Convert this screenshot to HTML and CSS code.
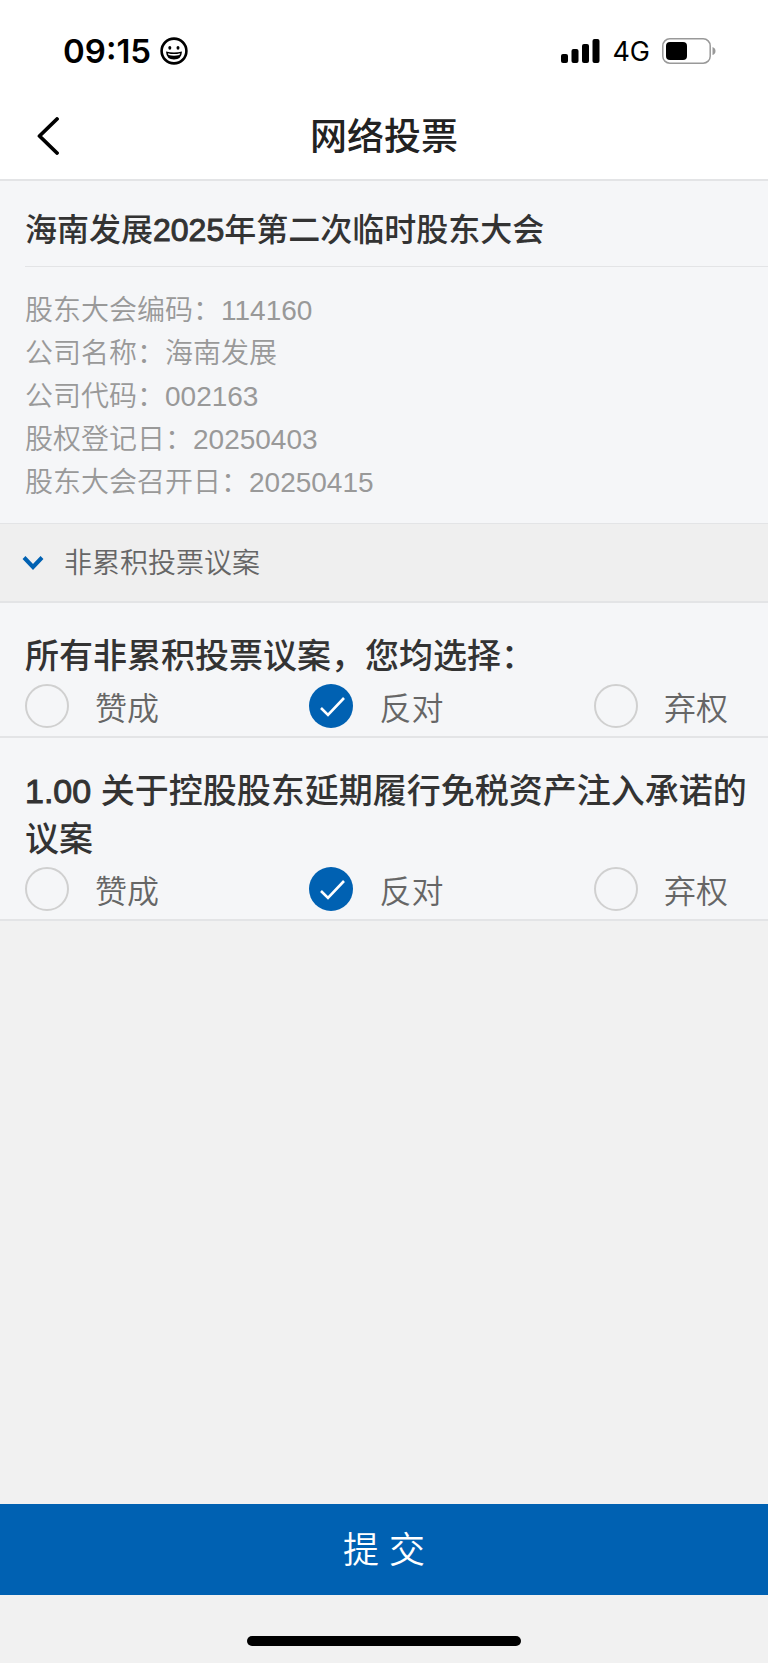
FILE: index.html
```html
<!DOCTYPE html>
<html lang="zh-CN">
<head>
    <meta charset="UTF-8">
    <meta name="viewport" content="width=device-width, initial-scale=1.0">
    <title>网络投票</title>
    <link rel="stylesheet" href="styles.css">
</head>
<body>
    <div class="statusbar">
        <div class="status-left">
            <span class="time">09:15</span>
            <svg class="smile" width="28" height="28" viewBox="0 0 28 28">
                <circle cx="14" cy="14" r="12.4" fill="none" stroke="#000" stroke-width="2.6"/>
                <ellipse cx="9.8" cy="10.8" rx="1.5" ry="1.9"/>
                <ellipse cx="18" cy="10.8" rx="1.5" ry="1.9"/>
                <path d="M6 14.4Q14 16.6 22 14.4Q21.6 22.4 14 22.4Q6.4 22.4 6 14.4Z"/>
                <path d="M7.8 16.2Q14 17.9 20.2 16.2L19.5 18Q14 19.3 8.5 18Z" fill="#fff"/>
            </svg>
        </div>
        <div class="status-right">
            <svg width="39" height="24" viewBox="0 0 39 24">
                <rect x="0" y="15" width="7" height="9" rx="2"/>
                <rect x="10.5" y="10" width="7" height="14" rx="2"/>
                <rect x="21" y="5" width="7" height="19" rx="2"/>
                <rect x="31.5" y="0" width="7" height="24" rx="2"/>
            </svg>
            <span class="network">4G</span>
            <svg width="54" height="26" viewBox="0 0 54 26">
                <rect x="0.8" y="0.8" width="47.4" height="24.4" rx="7" fill="none" stroke="#999" stroke-width="1.5"/>
                <rect x="4" y="4" width="21" height="18" rx="4"/>
                <path d="M50.5 9Q53.5 10 53.5 13Q53.5 16 50.5 17Z" fill="#999"/>
            </svg>
        </div>
    </div>

    <header class="navbar">
        <button class="back" type="button" aria-label="返回">
            <svg width="22" height="38" viewBox="0 0 22 38">
                <path d="M20 2L2.5 19L20 36" fill="none" stroke="#000" stroke-width="3.8" stroke-linecap="round" stroke-linejoin="round"/>
            </svg>
        </button>
        <h1>网络投票</h1>
    </header>

    <main>
        <section class="meeting">
            <h2>海南发展<span class="num">2025</span>年第二次临时股东大会</h2>
            <div class="info">
                <p>股东大会编码：114160</p>
                <p>公司名称：海南发展</p>
                <p>公司代码：002163</p>
                <p>股权登记日：20250403</p>
                <p>股东大会召开日：20250415</p>
            </div>
        </section>

        <button class="group" type="button" aria-expanded="true">
            <svg width="22" height="16" viewBox="0 0 22 16">
                <path d="M2 2.5L11 12L20 2.5" fill="none" stroke="#0061b2" stroke-width="4"/>
            </svg>
            <span>非累积投票议案</span>
        </button>

        <fieldset class="vote">
            <legend>所有非累积投票议案，您均选择：</legend>
            <div class="options">
                <label><input type="radio" name="all" value="1">赞成</label>
                <label><input type="radio" name="all" value="2" checked>反对</label>
                <label><input type="radio" name="all" value="3">弃权</label>
            </div>
        </fieldset>

        <fieldset class="vote">
            <legend><span class="num">1.00</span> 关于控股股东延期履行免税资产注入承诺的议案</legend>
            <div class="options">
                <label><input type="radio" name="item1" value="1">赞成</label>
                <label><input type="radio" name="item1" value="2" checked>反对</label>
                <label><input type="radio" name="item1" value="3">弃权</label>
            </div>
        </fieldset>
    </main>

    <footer>
        <button class="submit" type="submit">提 交</button>
        <div class="home"></div>
    </footer>
</body>
</html>
```

FILE: styles.css
```css
:root{
    --blue: #0061b2;
    --line: #e3e4e6;
    --panel: #f5f6f8;
}
*{
    box-sizing: border-box;
}
body{
    margin: 0;
    min-height: 100vh;
    display: flex;
    flex-direction: column;
    background-color: #f1f1f1;
    font-family: "Liberation Sans", "Noto Sans CJK SC", sans-serif;
    color: #333;
}
h1, h2, p{
    margin: 0;
}
button{
    font-family: inherit;
    border: none;
    padding: 0;
}
svg{
    display: block;
}

/* status bar */
.statusbar{
    display: flex;
    justify-content: space-between;
    align-items: center;
    height: 92px;
    padding: 10px 52px 0 63px;
    background-color: white;
    color: black;
    font-family: Inter, sans-serif;
}
.status-left{
    display: flex;
    align-items: center;
    gap: 9px;
}
.status-right{
    display: flex;
    align-items: center;
    gap: 12px;
}
.time{
    font-size: 33px;
    font-weight: 600;
}
.network{
    font-size: 27px;
}

/* title bar */
.navbar{
    display: grid;
    grid-template-columns: 60px 1fr 60px;
    align-items: center;
    height: 89px;
    padding: 0 16px;
    background-color: white;
    border-bottom: 2px solid var(--line);
}
.back{
    display: flex;
    align-items: center;
    height: 60px;
    padding-left: 21px;
    background: none;
}
h1{
    padding-bottom: 4px;
    font-size: 37px;
    font-weight: 500;
    text-align: center;
    color: #222;
}

/* the latin font has no medium weight, thicken the digits a bit */
.num{
    -webkit-text-stroke: 1px #333;
}

/* meeting info */
.meeting{
    background-color: var(--panel);
    padding-left: 25px;
}
h2{
    font-size: 32px;
    font-weight: 500;
    line-height: 48px;
    padding: 25px 0 12px;
    border-bottom: 1px solid var(--line);
}
.info{
    padding: 22px 0 19px;
    font-size: 28px;
    font-weight: 350;
    line-height: 43px;
    color: #999;
}

.group{
    display: flex;
    align-items: center;
    gap: 20px;
    width: 100%;
    height: 80px;
    padding: 0 22px;
    background-color: #efefef;
    border-top: 1px solid var(--line);
    border-bottom: 2px solid var(--line);
    font-size: 28px;
    font-weight: 350;
    color: #666;
}
.group span{
    padding-bottom: 3px;
}

/* vote items */
.vote{
    margin: 0;
    min-width: 0;
    border: none;
    padding: 29px 0 2px 25px;
    background-color: var(--panel);
    border-bottom: 2px solid var(--line);
}
legend{
    float: left;
    width: 100%;
    padding: 0 0 4px;
    font-size: 34px;
    font-weight: 500;
    line-height: 48px;
}
.options{
    clear: both;
    display: flex;
    justify-content: space-between;
    padding-right: 40px;
}
.options label{
    display: flex;
    align-items: flex-start;
    gap: 26px;
    font-size: 32px;
    font-weight: 350;
    line-height: 50px;
    color: #666;
}
.options input{
    appearance: none;
    width: 44px;
    height: 44px;
    margin: 0;
    border: 2px solid #d0d0d0;
    border-radius: 50%;
}
.options input:checked{
    border: none;
    background: var(--blue) url("data:image/svg+xml,%3Csvg xmlns='http://www.w3.org/2000/svg' viewBox='0 0 44 44'%3E%3Cpath d='M12 24L19 31L35 14' fill='none' stroke='white' stroke-width='2.6'/%3E%3C/svg%3E");
}

/* bottom */
footer{
    margin-top: auto;
}
.submit{
    display: block;
    width: 100%;
    height: 91px;
    padding-bottom: 6px;
    background-color: var(--blue);
    color: white;
    font-size: 36px;
    font-weight: 350;
}
.home{
    width: 274px;
    height: 10px;
    margin: 41px auto 17px;
    border-radius: 5px;
    background-color: black;
}
```
